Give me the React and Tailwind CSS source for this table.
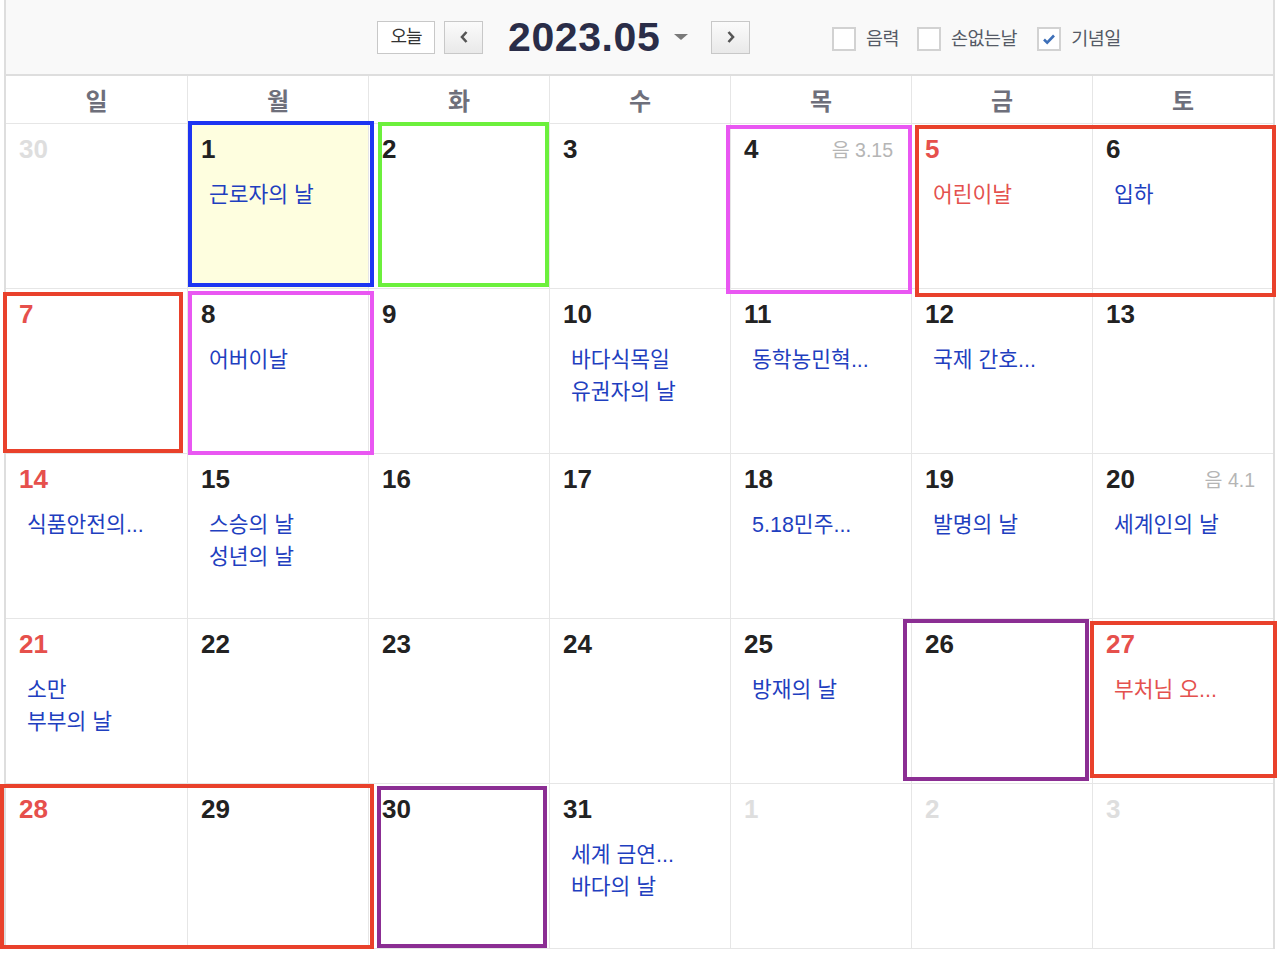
import React from "react";

const FONT = { fontFamily: '"Liberation Sans", "Noto Sans CJK KR", sans-serif' };

const DAY_NAMES = ["일", "월", "화", "수", "목", "금", "토"];

// e: events, r: red number, o: other month, l: lunar date, y: highlighted cell
const WEEKS = [
  [
    { d: 30, o: true },
    { d: 1, y: true, e: ["근로자의 날"] },
    { d: 2 },
    { d: 3 },
    { d: 4, l: "3.15" },
    { d: 5, r: true, e: [{ t: "어린이날", red: true }] },
    { d: 6, e: ["입하"] },
  ],
  [
    { d: 7, r: true },
    { d: 8, e: ["어버이날"] },
    { d: 9 },
    { d: 10, e: ["바다식목일", "유권자의 날"] },
    { d: 11, e: ["동학농민혁..."] },
    { d: 12, e: ["국제 간호..."] },
    { d: 13 },
  ],
  [
    { d: 14, r: true, e: ["식품안전의..."] },
    { d: 15, e: ["스승의 날", "성년의 날"] },
    { d: 16 },
    { d: 17 },
    { d: 18, e: ["5.18민주..."] },
    { d: 19, e: ["발명의 날"] },
    { d: 20, l: "4.1", e: ["세계인의 날"] },
  ],
  [
    { d: 21, r: true, e: ["소만", "부부의 날"] },
    { d: 22 },
    { d: 23 },
    { d: 24 },
    { d: 25, e: ["방재의 날"] },
    { d: 26 },
    { d: 27, r: true, e: [{ t: "부처님 오...", red: true }] },
  ],
  [
    { d: 28, r: true },
    { d: 29 },
    { d: 30 },
    { d: 31, e: ["세계 금연...", "바다의 날"] },
    { d: 1, o: true },
    { d: 2, o: true },
    { d: 3, o: true },
  ],
];

// annotation boxes drawn over the calendar
const MARKS = [
  { left: 188, top: 121, width: 186, height: 166, color: "#1d35f2" },
  { left: 378, top: 122, width: 171, height: 165, color: "#6cf03c" },
  { left: 726, top: 125, width: 186, height: 169, color: "#e957f2" },
  { left: 915, top: 125, width: 361, height: 172, color: "#e9412b" },
  { left: 3, top: 292, width: 180, height: 161, color: "#e9412b" },
  { left: 188, top: 291, width: 186, height: 164, color: "#e957f2" },
  { left: 903, top: 619, width: 186, height: 162, color: "#8b2e93" },
  { left: 1090, top: 621, width: 187, height: 157, color: "#e9412b" },
  { left: 0, top: 784, width: 374, height: 165, color: "#e9412b" },
  { left: 377, top: 786, width: 170, height: 162, color: "#8b2e93" },
];

function NavButton({ dir }) {
  return (
    <button className="flex h-[33px] w-[39px] items-center justify-center border border-[#c8c8c8] bg-gradient-to-b from-[#fbfbfb] to-[#e9e9e9]">
      <svg width="10" height="14" viewBox="0 0 10 14">
        <path
          d={dir === "left" ? "M7.5 2L3 7l4.5 5" : "M2.5 2L7 7l-4.5 5"}
          fill="none"
          stroke="#555"
          strokeWidth="2.6"
        />
      </svg>
    </button>
  );
}

function CheckBox({ label, checked }) {
  return (
    <div className="flex items-center">
      <span className="flex h-[24px] w-[24px] items-center justify-center border-2 border-[#d2d2d2] bg-white">
        {checked && (
          <svg width="16" height="16" viewBox="0 0 16 16">
            <path d="M3 8.5l3.2 3.2L13 4.5" fill="none" stroke="#3d6fb8" strokeWidth="2.6" />
          </svg>
        )}
      </span>
      <span className="ml-[10px] text-[18.5px] tracking-[-0.5px] text-[#555a66]">{label}</span>
    </div>
  );
}

function DayCell({ cell, first }) {
  const numColor = cell.o ? "text-[#dedede]" : cell.r ? "text-[#e6504c]" : "text-[#222]";
  return (
    <div
      className={`relative h-[165px] border-b border-[#e6e6e6] ${first ? "" : "border-l"} ${
        cell.y ? "bg-[#fefedf]" : "bg-white"
      }`}
    >
      <div className="flex items-start justify-between pl-[13px] pr-[18px] pt-[11px]">
        <span className={`text-[26px] font-bold leading-[29px] ${numColor}`}>{cell.d}</span>
        {cell.l && (
          <span className="mt-[2px] text-[19.5px] leading-[26px] text-[#b5b5b5]">
            음 {cell.l}
          </span>
        )}
      </div>
      {cell.e && (
        <div className="mt-[15px] pl-[21px]">
          {cell.e.map((ev, i) => {
            const t = typeof ev === "string" ? ev : ev.t;
            const red = typeof ev !== "string" && ev.red;
            return (
              <div
                key={i}
                className={`text-[21.5px] leading-[32px] ${red ? "text-[#e4514e]" : "text-[#1f3fbf]"}`}
              >
                {t}
              </div>
            );
          })}
        </div>
      )}
    </div>
  );
}

export default function App() {
  return (
    <div className="relative h-[955px] w-[1280px] overflow-hidden bg-white" style={FONT}>
      <div className="ml-[4px] w-[1271px] border-x-2 border-[#dedede]">
        {/* Toolbar */}
        <div className="flex h-[76px] items-center border-b-2 border-[#dedede] bg-[#f9f9f9] pl-[371px]">
          <div className="flex w-[455px] items-center">
            <button className="flex h-[33px] w-[58px] items-center justify-center border border-[#c8c8c8] bg-white text-[18px] tracking-[-1px] text-[#333]">
              오늘
            </button>
            <div className="ml-[9px]">
              <NavButton dir="left" />
            </div>
            <div className="ml-[25px] flex w-[154px] items-center">
              <span className="text-[41px] font-bold leading-none tracking-[0.6px] text-[#2a2d48]">
                2023.05
              </span>
            </div>
            <svg className="ml-[11px]" width="16" height="8" viewBox="0 0 16 8">
              <path d="M1 1h14L8 7z" fill="#7a7a7a" />
            </svg>
            <div className="ml-[22px]">
              <NavButton dir="right" />
            </div>
          </div>
          <div className="mt-[4px] flex items-center gap-[18px]">
            <CheckBox label="음력" />
            <CheckBox label="손없는날" />
            <div className="ml-[2px]">
              <CheckBox label="기념일" checked />
            </div>
          </div>
        </div>

        {/* Day names */}
        <div className="grid h-[48px] grid-cols-7 border-b border-[#e6e6e6]">
          {DAY_NAMES.map((n, i) => (
            <div
              key={n}
              className={`flex items-center justify-center pt-[4px] text-[24px] font-bold text-[#6e6f7b] ${
                i ? "border-l border-[#e6e6e6]" : ""
              }`}
            >
              {n}
            </div>
          ))}
        </div>

        {/* Weeks */}
        {WEEKS.map((week, wi) => (
          <div key={wi} className="grid grid-cols-7">
            {week.map((cell, ci) => (
              <DayCell key={ci} cell={cell} first={ci === 0} />
            ))}
          </div>
        ))}
      </div>

      {MARKS.map((m, i) => (
        <div
          key={i}
          className="pointer-events-none absolute border-4"
          style={{ left: m.left, top: m.top, width: m.width, height: m.height, borderColor: m.color }}
        />
      ))}
    </div>
  );
}
